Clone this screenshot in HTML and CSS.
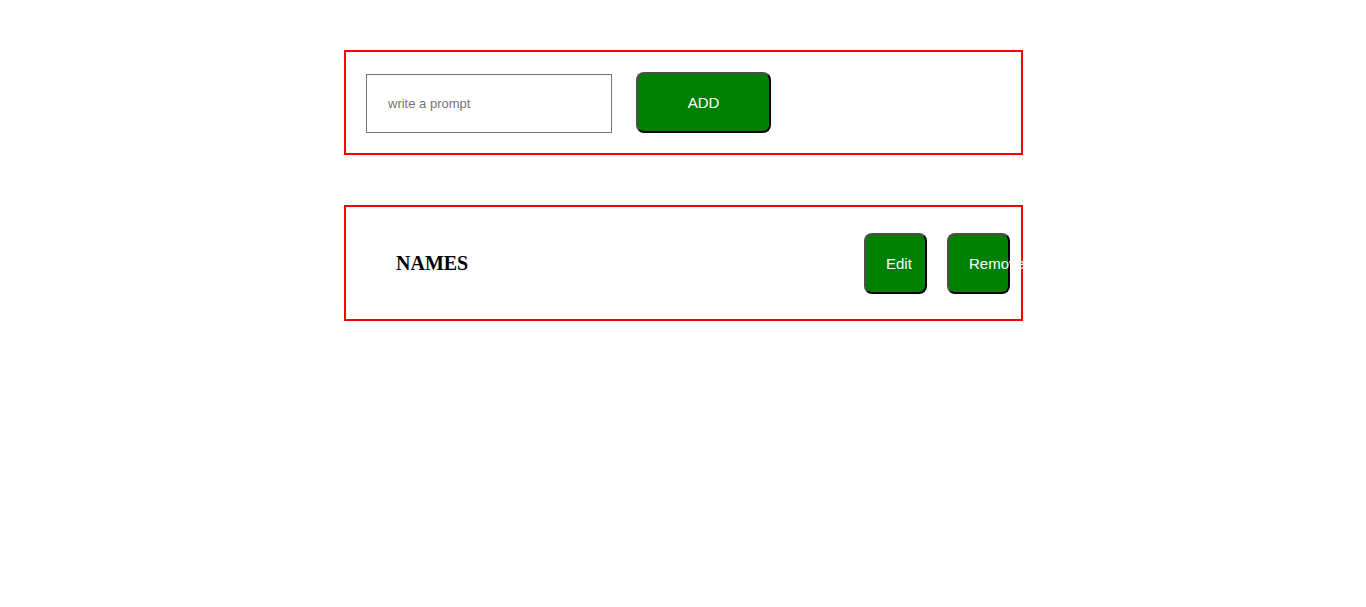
FILE: index.html
```html
<!DOCTYPE html>
<html>
<head>
<meta charset="utf-8">
<link rel="stylesheet" href="styles.css">
</head>
<body>
<main class="page">
  <section class="panel add-panel">
    <input class="prompt" type="text" placeholder="write a prompt">
    <button class="btn add-btn">ADD</button>
  </section>
  <section class="panel list-panel">
    <h3 class="name">NAMES</h3>
    <div class="actions">
      <button class="btn small-btn">Edit</button>
      <button class="btn small-btn">Remove</button>
    </div>
  </section>
</main>
</body>
</html>
```
FILE: styles.css
```css
html, body {
  margin: 0;
  background: #fff;
}
.page {
  display: flex;
  flex-direction: column;
  align-items: flex-start;
  gap: 50px;
  padding: 50px 0 0 344px;
}
.panel {
  box-sizing: border-box;
  width: 679px;
  border: 2px solid #ff0000;
  display: flex;
}
.add-panel {
  padding: 20px;
  align-items: flex-end;
  gap: 24px;
}
.prompt {
  box-sizing: border-box;
  width: 246px;
  height: 59px;
  margin: 0;
  border: 1px solid #767676;
  padding: 0 0 0 21px;
  font: 13px "Liberation Sans", Arial, sans-serif;
  color: #000;
  outline: none;
}
.prompt::placeholder {
  color: #757575;
}
.btn {
  box-sizing: border-box;
  background: #008000;
  color: #fff;
  font: 15px "Liberation Sans", Arial, sans-serif;
  border-width: 2px;
  border-style: solid;
  border-color: #4d4d4d #000 #000 #4d4d4d;
  border-radius: 8px;
  height: 61px;
  margin: 0;
  cursor: pointer;
}
.add-btn {
  width: 135px;
}
.list-panel {
  height: 116px;
  align-items: center;
  padding: 0 11px 0 50px;
}
.name {
  flex: 1;
  margin: 0;
  font: bold 20px "Liberation Serif", "Times New Roman", serif;
  color: #000;
}
.actions {
  display: flex;
  gap: 20px;
}
.small-btn {
  width: 63px;
  padding: 0 0 0 20px;
  text-align: left;
  white-space: nowrap;
  overflow: visible;
}
```
